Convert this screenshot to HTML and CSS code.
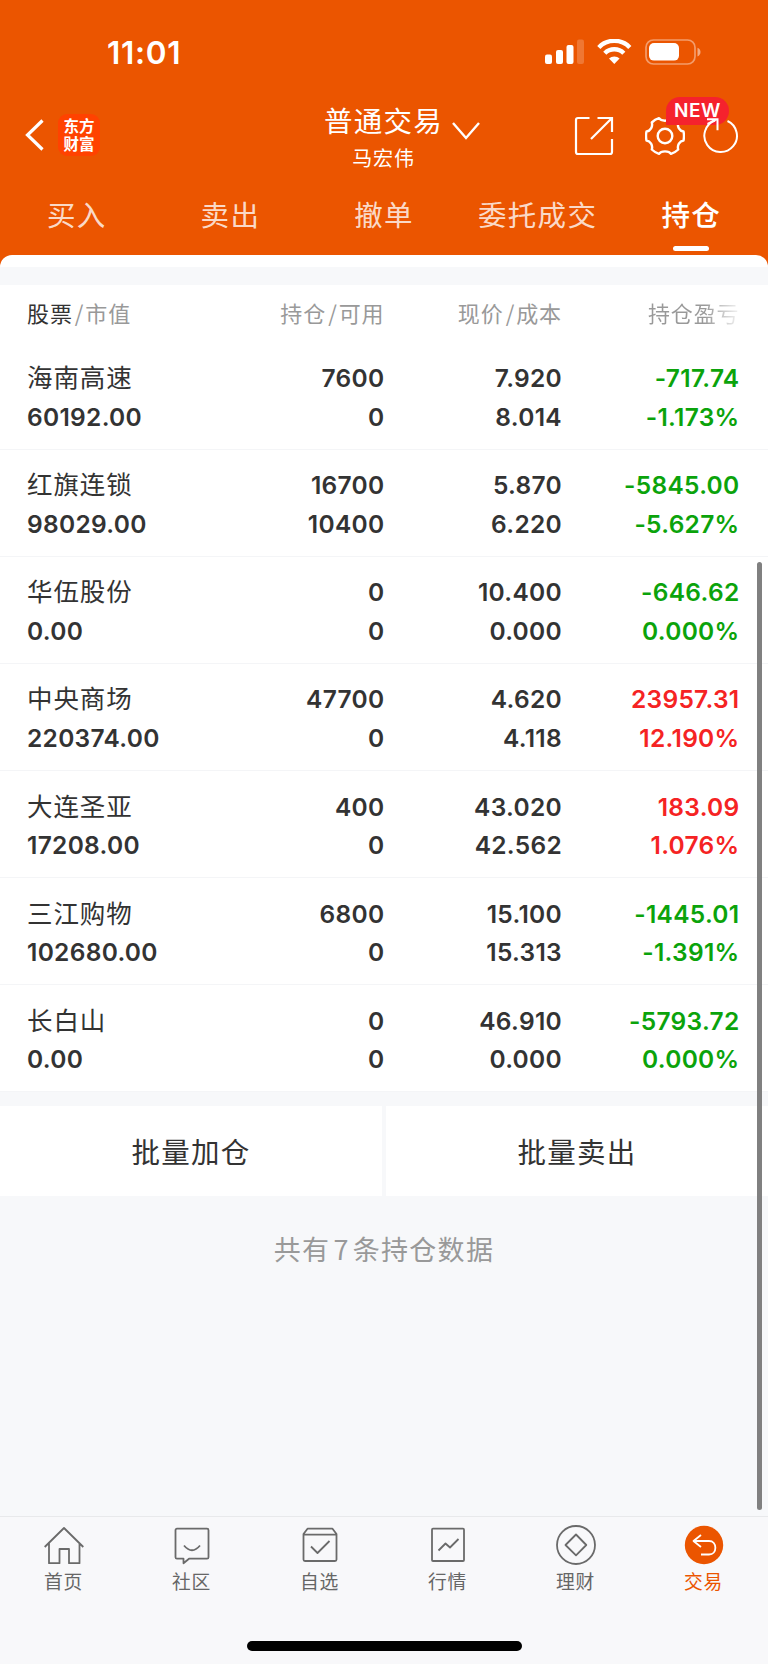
FILE: index.html
```html
<!DOCTYPE html>
<html lang="zh-CN">
<head>
<meta charset="UTF-8" />
<meta name="viewport" content="width=device-width, initial-scale=1" />
<title>持仓</title>
<link rel="stylesheet" href="styles.css">
</head>
<body>
<div class="app">

  <header class="header">
    <div class="status">
      <span class="time">11:01</span>
      <svg class="status-icons" width="158" height="27" viewBox="0 0 158 27" fill="#fff">
        <rect x="0" y="15.5" width="7" height="9.5" rx="2" />
        <rect x="11" y="11" width="7" height="14" rx="2" />
        <rect x="21.5" y="6" width="7" height="19" rx="2" />
        <rect x="32" y="0.5" width="7" height="24.5" rx="2" opacity="0.2" />
        <g fill="none" stroke="#fff" stroke-width="4.4">
          <path d="M53.8 8.4a21.5 21.5 0 0 1 31 0" />
          <path d="M59.8 14.2a13.3 13.3 0 0 1 19 0" />
        </g>
        <path d="M64 19.6a7.6 7.6 0 0 1 10.6 0l-5.3 5.4z" />
        <rect x="101" y="1" width="49" height="24" rx="7.5" fill="none" stroke="#fff" stroke-width="1.7" opacity="0.42" />
        <rect x="104" y="4" width="30" height="17.6" rx="5" />
        <path d="M152.5 8.8c4 1.4 4 7.2 0 8.6z" opacity="0.5" />
      </svg>
    </div>

    <div class="navbar">
      <div class="nav-left">
        <svg width="20" height="32" viewBox="0 0 20 32" fill="none" stroke="#fff" stroke-width="3.2">
          <path d="M17.5 1.5L2.5 16l15 14.5" />
        </svg>
        <div class="logo">东方<br>财富</div>
      </div>
      <div class="nav-title">
        <span class="title">普通交易</span>
        <span class="user">马宏伟</span>
        <svg class="chevron" width="30" height="20" viewBox="0 0 30 20" fill="none" stroke="#fff" stroke-width="2.4">
          <path d="M2 2l13 15L28 2" />
        </svg>
      </div>
      <div class="nav-right">
        <svg width="40" height="40" viewBox="0 0 40 40" fill="none" stroke="#fff" stroke-width="2.2">
          <path d="M15.5 2H4a2 2 0 0 0-2 2v32a2 2 0 0 0 2 2h32a2 2 0 0 0 2-2V23" />
          <path d="M23.5 2H38v14M38 2L17 23" />
        </svg>
        <div class="settings">
          <svg width="40" height="40" viewBox="0 0 40 40" fill="none" stroke="#fff" stroke-width="2.4" stroke-linejoin="round">
            <path d="M14 2.2C16 5.5 24 5.5 26 2.2q4 1.2 7.2 4.3C32 10.5 34.5 15 38.5 15.5q1 4.5 0 9C34.5 25 32 29.5 33.2 33.5q-3 3-7.2 4.3C24 34.5 16 34.5 14 37.8q-4-1.2-7.2-4.3C8 29.5 5.5 25 1.5 24.5q-1-4.5 0-9C5.5 15 8 10.5 6.8 6.5Q10 3.500 14 2.2z" />
            <circle cx="20" cy="20" r="7.3" />
          </svg>
          <span class="badge">NEW</span>
        </div>
        <svg class="refresh" width="38" height="40" viewBox="0 0 38 40" fill="none" stroke="#fff" stroke-width="2">
          <path d="M25.5 5A16.300 16.300 0 1 1 13 4.500" />
          <path d="M5 3.200h10.500v11M5.500 7.800l9-4.400" />
        </svg>
      </div>
    </div>

    <nav class="tabs">
      <a class="tab">买入</a>
      <a class="tab">卖出</a>
      <a class="tab">撤单</a>
      <a class="tab">委托成交</a>
      <a class="tab active">持仓</a>
    </nav>
    <div class="sheet-top"></div>
  </header>

  <main class="content">
    <div class="holdings">
      <div class="row head">
        <div><b>股票</b><i>/</i>市值</div>
        <div>持仓<i>/</i>可用</div>
        <div>现价<i>/</i>成本</div>
        <div class="fade">持仓盈亏</div>
      </div>
      <div class="row">
        <div><span class="name">海南高速</span><span>60192.00</span></div>
        <div><span>7600</span><span>0</span></div>
        <div><span>7.920</span><span>8.014</span></div>
        <div class="down"><span>-717.74</span><span>-1.173%</span></div>
      </div>
      <div class="row">
        <div><span class="name">红旗连锁</span><span>98029.00</span></div>
        <div><span>16700</span><span>10400</span></div>
        <div><span>5.870</span><span>6.220</span></div>
        <div class="down"><span>-5845.00</span><span>-5.627%</span></div>
      </div>
      <div class="row">
        <div><span class="name">华伍股份</span><span>0.00</span></div>
        <div><span>0</span><span>0</span></div>
        <div><span>10.400</span><span>0.000</span></div>
        <div class="down"><span>-646.62</span><span>0.000%</span></div>
      </div>
      <div class="row">
        <div><span class="name">中央商场</span><span>220374.00</span></div>
        <div><span>47700</span><span>0</span></div>
        <div><span>4.620</span><span>4.118</span></div>
        <div class="up"><span>23957.31</span><span>12.190%</span></div>
      </div>
      <div class="row">
        <div><span class="name">大连圣亚</span><span>17208.00</span></div>
        <div><span>400</span><span>0</span></div>
        <div><span>43.020</span><span>42.562</span></div>
        <div class="up"><span>183.09</span><span>1.076%</span></div>
      </div>
      <div class="row">
        <div><span class="name">三江购物</span><span>102680.00</span></div>
        <div><span>6800</span><span>0</span></div>
        <div><span>15.100</span><span>15.313</span></div>
        <div class="down"><span>-1445.01</span><span>-1.391%</span></div>
      </div>
      <div class="row">
        <div><span class="name">长白山</span><span>0.00</span></div>
        <div><span>0</span><span>0</span></div>
        <div><span>46.910</span><span>0.000</span></div>
        <div class="down"><span>-5793.72</span><span>0.000%</span></div>
      </div>
    </div>

    <div class="actions">
      <a class="action">批量加仓</a>
      <a class="action">批量卖出</a>
    </div>
    <p class="summary">共有<i>7</i>条持仓数据</p>
    <div class="scrollbar"></div>
  </main>

  <footer class="tabbar">
    <div class="tabbar-items">
      <a class="item">
        <svg width="40" height="40" viewBox="0 0 40 40">
          <path d="M.7 22L20 3l19.300 19M5 18v20.200h10.500V24h9.500v14.200h10.500V18" />
        </svg>
        <span>首页</span>
      </a>
      <a class="item">
        <svg width="40" height="40" viewBox="0 0 40 40">
          <path d="M5 3.700h30a1.500 1.500 0 0 1 1.500 1.500v27a1.500 1.500 0 0 1-1.500 1.500H17l-5.500 4.500v-4.500H5a1.500 1.500 0 0 1-1.500-1.500v-27A1.500 1.500 0 0 1 5 3.700z" />
          <path d="M12 20.500q8 9.500 16 0" />
        </svg>
        <span>社区</span>
      </a>
      <a class="item">
        <svg width="40" height="40" viewBox="0 0 40 40">
          <path d="M3.500 9l4-5.300h25l4 5.300v25.500a1.500 1.500 0 0 1-1.500 1.500H5a1.500 1.500 0 0 1-1.500-1.500zM3.500 9.700h33" />
          <path d="M11 21.500l6.500 6.500L29.500 16" />
        </svg>
        <span>自选</span>
      </a>
      <a class="item">
        <svg width="40" height="40" viewBox="0 0 40 40">
          <rect x="4" y="3.7" width="32" height="32.3" rx="1" />
          <path d="M10.500 25.500l7-7 4.500 4L30.500 14" />
        </svg>
        <span>行情</span>
      </a>
      <a class="item">
        <svg width="40" height="40" viewBox="0 0 40 40">
          <circle cx="20" cy="20" r="19" />
          <path d="M20 9.500L30.300 20 20 30.300 9.500 20z" />
        </svg>
        <span>理财</span>
      </a>
      <a class="item current">
        <svg width="40" height="40" viewBox="0 0 40 40">
          <circle class="disc" cx="20" cy="20" r="19.2" />
          <path d="M17 10L9.500 16l7.500 6M9.500 16H25c8.500 0 8.500 13.500 0 13.500h-8" />
        </svg>
        <span>交易</span>
      </a>
    </div>
    <div class="home-indicator"></div>
  </footer>

</div>
</body>
</html>
```
FILE: styles.css
```css
:root {
  --brand: #eb5500;
  --page: #f7f8fa;
  --text: #333;
  --muted: #999;
  --up: #f52323;
  --down: #0ba30b;
}
* {
  box-sizing: border-box;
}
body {
  margin: 0;
  background: #fff;
  color: var(--text);
  font-family: Inter, "Noto Sans CJK SC", sans-serif;
}
i {
  font-style: normal;
}
svg {
  display: block;
  flex: none;
}
.app {
  width: 768px;
  height: 1664px;
  display: flex;
  flex-direction: column;
  background: var(--page);
}

/* header */
.header {
  height: 267px;
  background: var(--brand);
  color: #fff;
  display: flex;
  flex-direction: column;
}
.status {
  height: 96px;
  padding: 33px 65px 0 107px;
  display: flex;
  justify-content: space-between;
}
.time {
  font-size: 31.5px;
  line-height: 40px;
  font-weight: 600;
  letter-spacing: 0.7px;
}
.status-icons {
  margin-top: 6px;
}
.navbar {
  height: 80px;
  padding: 0 28px 0 25px;
  display: grid;
  grid-template-columns: 1fr 180px 1fr;
}
.nav-left {
  display: flex;
  align-items: center;
  gap: 13px;
  padding-bottom: 2px;
}
.logo {
  width: 42px;
  height: 42px;
  padding-top: 3px;
  border-radius: 9px;
  background: #ff4200;
  font-family: "Noto Sans CJK SC", sans-serif;
  font-size: 15.5px;
  line-height: 17.5px;
  font-weight: 700;
  text-align: center;
}
.nav-title {
  position: relative;
  display: flex;
  flex-direction: column;
  align-items: center;
}
.title {
  font-size: 28.5px;
  line-height: 40px;
  letter-spacing: 1.3px;
  margin: 6px 0 0 2px;
}
.user {
  font-size: 20px;
  line-height: 30px;
  letter-spacing: 0.8px;
  margin: 2px 0 0 2px;
}
.chevron {
  position: absolute;
  left: 158px;
  top: 25px;
}
.nav-right {
  display: flex;
  align-items: center;
  justify-content: flex-end;
}
.settings {
  position: relative;
  margin-left: 31px;
}
.badge {
  position: absolute;
  left: 21px;
  top: -19px;
  width: 63px;
  height: 28px;
  border-radius: 14px 14px 14px 0;
  background: #f5222d;
  font-size: 19px;
  line-height: 28px;
  font-weight: 600;
  letter-spacing: 0.6px;
  text-align: center;
}
.refresh {
  position: relative;
  margin-left: 17px;
}
.tabs {
  height: 79px;
  display: grid;
  grid-template-columns: repeat(5, 1fr);
}
.tab {
  display: flex;
  flex-direction: column;
  align-items: center;
  padding-top: 20px;
  font-size: 28.5px;
  line-height: 40px;
  letter-spacing: 1.3px;
  color: rgba(255, 255, 255, 0.8);
}
.tab.active {
  color: #fff;
  font-weight: 500;
}
.tab.active::after {
  content: "";
  width: 36px;
  height: 5px;
  margin-top: 10px;
  border-radius: 3px;
  background: #fff;
}
.sheet-top {
  height: 12px;
  background: #fff;
  border-radius: 12px 12px 0 0;
}

/* holdings list */
.content {
  position: relative;
  height: 1249px;
  padding-top: 18px;
}
.holdings {
  background: #fff;
}
.row {
  height: 107.15px;
  padding: 16.5px 28.5px 0 27px;
  border-bottom: 1px solid #f4f5f7;
  display: grid;
  grid-template-columns: 1fr 180px 177.5px 177.5px;
  font-size: 24.5px;
  line-height: 38.6px;
  font-weight: 600;
  letter-spacing: 0.3px;
  text-align: right;
}
.row > div:first-child {
  text-align: left;
}
.row span {
  display: block;
}
.row .name {
  font-size: 25.5px;
  font-weight: 400;
  letter-spacing: 0.9px;
}
.row.head {
  height: 57.5px;
  padding-top: 8px;
  border: 0;
  color: var(--muted);
  font-family: "Noto Sans CJK SC", sans-serif;
  font-size: 22px;
  font-weight: 400;
  letter-spacing: 0.9px;
}
.head b {
  color: var(--text);
  font-weight: 400;
}
.head i {
  margin: 0 1px 0 2px;
}
.head .fade {
  background: linear-gradient(90deg, #999 80%, #fff 102%);
  background-clip: text;
  color: transparent;
}
.up {
  color: var(--up);
}
.down {
  color: var(--down);
}

.actions {
  margin-top: 14px;
  display: grid;
  grid-template-columns: 382px 1fr;
  gap: 4px;
}
.action {
  height: 90px;
  background: #fff;
  font-size: 28.5px;
  line-height: 93px;
  letter-spacing: 1.3px;
  text-align: center;
}
.summary {
  margin: 33px 0 0;
  color: var(--muted);
  font-family: "Noto Sans CJK SC", sans-serif;
  font-size: 27px;
  line-height: 40px;
  letter-spacing: 1.3px;
  text-align: center;
}
.summary i {
  margin: 0 3px;
}
.scrollbar {
  position: absolute;
  right: 6px;
  top: 295px;
  width: 5.5px;
  height: 948px;
  border-radius: 3px;
  background: #808080;
}

/* bottom tab bar */
.tabbar {
  height: 148px;
  border-top: 1px solid #e8e9eb;
  background: #f8f8fa;
}
.tabbar-items {
  height: 124px;
  display: grid;
  grid-template-columns: repeat(6, 1fr);
}
.item {
  display: flex;
  flex-direction: column;
  align-items: center;
  padding-top: 8px;
  color: #666;
  font-size: 18.8px;
  line-height: 28px;
  letter-spacing: 0.6px;
}
.item svg {
  fill: none;
  stroke: #6a6a6a;
  stroke-width: 1.8;
  stroke-linejoin: round;
}
.item span {
  margin: 4px 1px 0 0;
}
.item.current {
  color: var(--brand);
}
.item.current svg {
  stroke: #fff;
}
.item .disc {
  fill: var(--brand);
  stroke: none;
}
.home-indicator {
  width: 275px;
  height: 9.5px;
  margin: 0 auto;
  border-radius: 5px;
  background: #000;
}
```
